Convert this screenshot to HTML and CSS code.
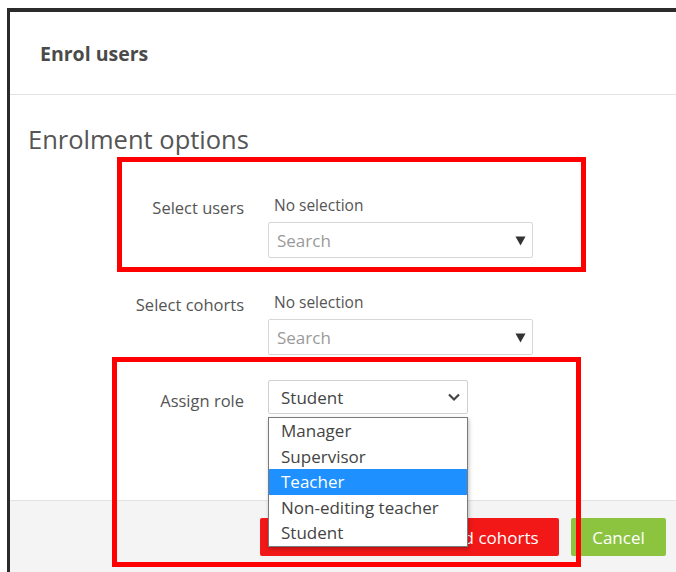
FILE: index.html
```html
<!DOCTYPE html>
<html lang="en">
<head>
<meta charset="utf-8">
<title>Enrol users</title>
<link rel="stylesheet" href="styles.css">
</head>
<body>
<div class="frame">
  <div class="modal">
    <header class="modal-header">
      <h2 class="modal-title">Enrol users</h2>
    </header>
    <main class="modal-body">
      <h3 class="section-title">Enrolment options</h3>
      <div class="form-row">
        <label class="form-label label-top">Select users</label>
        <div class="form-control">
          <div class="selection">No selection</div>
          <div class="search-box wide">
            <span class="placeholder">Search</span>
            <svg class="caret" width="11" height="11" viewBox="0 0 11 11"><path d="M0.5 1.5h10L5.5 10.5z" fill="#333"/></svg>
          </div>
        </div>
      </div>
      <div class="form-row row-cohorts">
        <label class="form-label label-top">Select cohorts</label>
        <div class="form-control">
          <div class="selection">No selection</div>
          <div class="search-box wide">
            <span class="placeholder">Search</span>
            <svg class="caret" width="11" height="11" viewBox="0 0 11 11"><path d="M0.5 1.5h10L5.5 10.5z" fill="#333"/></svg>
          </div>
        </div>
      </div>
      <div class="form-row row-role">
        <label class="form-label label-mid">Assign role</label>
        <div class="form-control">
          <div class="role-select">
            <span>Student</span>
            <svg class="chevron" width="14" height="10" viewBox="0 0 14 10"><path d="M2 2.5l5 5 5-5" fill="none" stroke="#444" stroke-width="2.2"/></svg>
          </div>
        </div>
      </div>
    </main>
    <footer class="modal-footer">
      <button class="btn btn-primary">Enrol selected users and cohorts</button>
      <button class="btn btn-cancel">Cancel</button>
    </footer>
  </div>
</div>

<ul class="role-list">
  <li>Manager</li>
  <li>Supervisor</li>
  <li class="active">Teacher</li>
  <li>Non-editing teacher</li>
  <li>Student</li>
</ul>

<div class="mark mark-users"></div>
<div class="mark mark-role"></div>
</body>
</html>
```

FILE: styles.css
```css
html, body {
  margin: 0;
  height: 100%;
  background: #fff;
  overflow: hidden;
}

body {
  position: relative;
  font-family: "Open Sans", "Noto Sans", sans-serif;
  color: #555;
}

.frame {
  margin: 8px 0 0 7px;
  border-top: 4px solid #2b2b2b;
  border-left: 3px solid #2b2b2b;
  height: calc(100% - 12px);
}

.modal {
  display: flex;
  flex-direction: column;
  height: 100%;
  background: #fff;
}

.modal-header {
  height: 82px;
  display: flex;
  align-items: center;
  padding: 0 30px;
  border-bottom: 1px solid #e3e3e3;
}

.modal-title {
  margin: 0;
  font-size: 19.5px;
  font-weight: 700;
  color: #4a4a4a;
}

.modal-body {
  padding: 28px 0 0 18px;
  height: 405px;
  box-sizing: border-box;
}

.section-title {
  margin: 0 0 40px;
  font-size: 25.5px;
  line-height: 32px;
  font-weight: 400;
  color: #555;
}

.form-row {
  display: grid;
  grid-template-columns: 216px 265px;
  column-gap: 24px;
}

.row-cohorts {
  margin-top: 34px;
}

.row-role {
  margin-top: 25px;
}

.form-label {
  text-align: right;
  font-size: 16.5px;
  line-height: 20px;
  color: #555;
}

.label-top {
  padding-top: 3px;
}

.label-mid {
  padding-top: 11px;
}

.selection {
  padding-left: 6px;
  font-size: 15.5px;
  line-height: 20px;
  color: #555;
}

.search-box {
  margin-top: 7px;
  height: 36px;
  box-sizing: border-box;
  border: 1px solid #d7d7d7;
  border-radius: 2px;
  display: flex;
  align-items: center;
  justify-content: space-between;
  padding: 0 6px 0 8px;
}

.placeholder {
  font-size: 17px;
  color: #9a9a9a;
}

.caret {
  display: block;
}

.role-select {
  width: 200px;
  height: 34px;
  box-sizing: border-box;
  border: 1px solid #d0d0d0;
  border-radius: 2px;
  display: flex;
  align-items: center;
  justify-content: space-between;
  padding: 0 6px 0 12px;
  font-size: 17px;
  color: #444;
}

.chevron {
  display: block;
}

.modal-footer {
  flex: 1;
  border-top: 1px solid #e2e2e2;
  background: #f4f4f4;
  display: flex;
  justify-content: flex-end;
  align-items: flex-start;
  gap: 12px;
  padding: 17px 10px 0 0;
}

.btn {
  height: 38px;
  border: none;
  border-radius: 2px;
  color: #fff;
  font-family: "Open Sans", "Noto Sans", sans-serif;
  font-size: 17px;
  padding: 0 10px;
}

.btn-primary {
  width: 299px;
  background: #f21818;
}

.btn-cancel {
  width: 95px;
  background: #8cc43f;
}

.role-list {
  position: absolute;
  left: 268px;
  top: 417px;
  width: 200px;
  margin: 0;
  padding: 0;
  list-style: none;
  box-sizing: border-box;
  border: 1px solid #7a7a7a;
  background: #fff;
  box-shadow: 1px 2px 4px rgba(0, 0, 0, 0.25);
  font-size: 17px;
  color: #444;
}

.role-list li {
  height: 25.5px;
  line-height: 25.5px;
  padding-left: 12px;
}

.role-list .active {
  background: #1e90ff;
  color: #fff;
}

.mark {
  position: absolute;
  border: 5px solid #ff0000;
  box-sizing: border-box;
}

.mark-users {
  left: 117px;
  top: 157px;
  width: 469px;
  height: 115px;
}

.mark-role {
  left: 112px;
  top: 357px;
  width: 469px;
  height: 210px;
}
```
